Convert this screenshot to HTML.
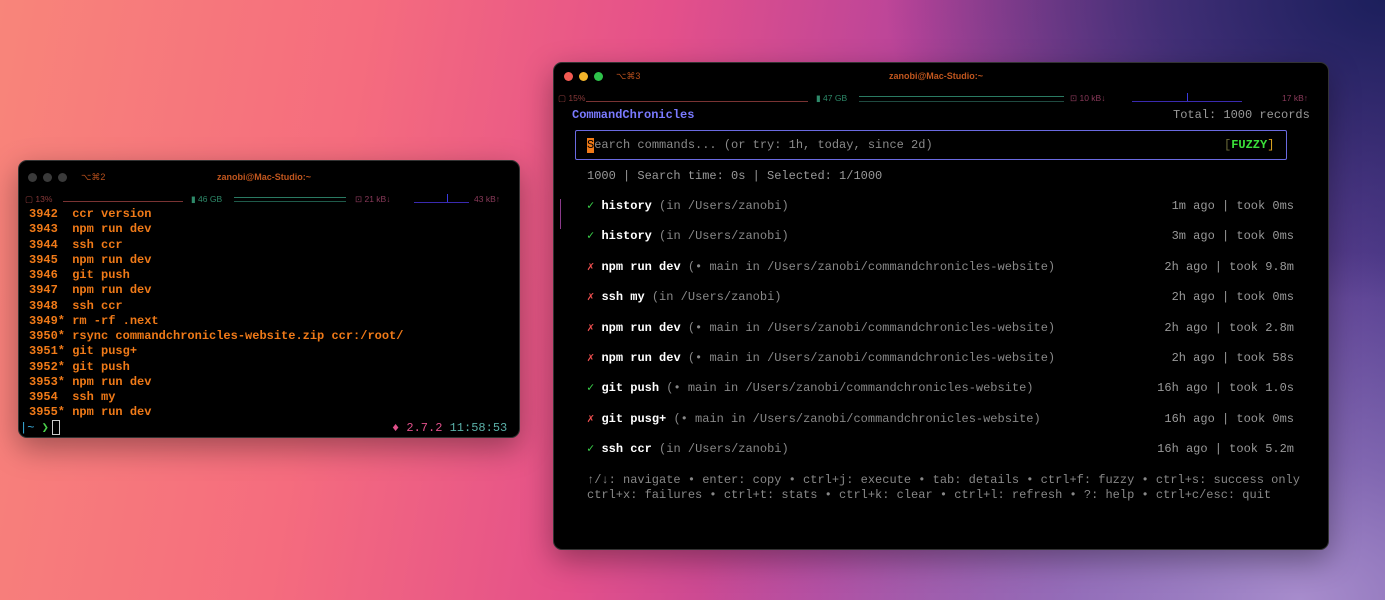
<!DOCTYPE html>
<html><head><meta charset="utf-8"><style>
*{margin:0;padding:0;box-sizing:border-box}
html,body{width:1385px;height:600px;overflow:hidden}
body{position:relative;font-family:"Liberation Mono",monospace;
background:
radial-gradient(ellipse 500px 300px at 1385px 0px,#1c1f5c 0%,rgba(40,35,100,.7) 45%,rgba(60,40,110,0) 100%),
radial-gradient(ellipse 600px 350px at 1300px 600px,#a78ccc 0%,rgba(160,130,200,.6) 40%,rgba(160,120,200,0) 100%),
linear-gradient(100deg,#f8857a 0%,#f56c7e 25%,#e4508a 45%,#b8449a 62%,#7d4aa0 80%,#4a3a8a 100%);}
.win{position:absolute;background:#000;border-radius:9px;box-shadow:0 10px 30px rgba(0,0,0,.35);border:1px solid #333}
.t{position:absolute;white-space:pre;font-size:12px;line-height:15px}
.dot{position:absolute;width:9px;height:9px;border-radius:50%}
.sm{position:absolute;font-family:"Liberation Sans",sans-serif;font-size:8.5px;white-space:pre}
</style></head><body>

<!-- LEFT WINDOW -->
<div class="win" style="left:18px;top:160px;width:502px;height:278px">
 <div class="dot" style="left:9px;top:12px;background:#3a3a3a"></div>
 <div class="dot" style="left:24px;top:12px;background:#3a3a3a"></div>
 <div class="dot" style="left:39px;top:12px;background:#3a3a3a"></div>
 <div class="sm" style="left:62px;top:11px;color:#b8501c;font-size:9px">⌥⌘2</div>
 <div class="sm" style="left:198px;top:11px;color:#c0561e;font-size:9px;font-weight:bold">zanobi@Mac-Studio:~</div>
 <div class="sm" style="left:6px;top:33px;color:#8a3a3a">▢ 13%</div>
 <div style="position:absolute;left:44px;top:40px;width:120px;height:1px;background:#7a3333"></div>
 <div class="sm" style="left:172px;top:33px;color:#2e8a6a">▮ 46 GB</div>
 <div style="position:absolute;left:215px;top:36px;width:112px;height:1px;background:#2a7a62"></div>
 <div style="position:absolute;left:215px;top:40px;width:112px;height:1px;background:#1f5a4a"></div>
 <div class="sm" style="left:336px;top:33px;color:#8a3a5a">⊡ 21 kB↓</div>
 <div style="position:absolute;left:395px;top:41px;width:55px;height:1px;background:#3a2ab0"></div>
 <div style="position:absolute;left:428px;top:33px;width:1px;height:8px;background:#3a3ae0"></div>
 <div class="sm" style="left:455px;top:33px;color:#8a3a5a">43 kB↑</div>
 <div class="t" style="left:10px;top:46px;color:#f07a18;font-weight:bold;line-height:15.25px">3942  ccr version
3943  npm run dev
3944  ssh ccr
3945  npm run dev
3946  git push
3947  npm run dev
3948  ssh ccr
3949* rm -rf .next
3950* rsync commandchronicles-website.zip ccr:/root/
3951* git pusg+
3952* git push
3953* npm run dev
3954  ssh my
3955* npm run dev</div>
 <div class="t" style="left:1px;top:260px;color:#3ab0e0">|~ <span style="color:#4ad04a">❯</span></div>
 <div style="position:absolute;left:33px;top:259px;width:8px;height:15px;border:1px solid #ccc"></div>
 <div class="t" style="left:373px;top:260px;color:#e0508a">♦ 2.7.2 <span style="color:#5ab0a8">11:58:53</span></div>
</div>

<!-- RIGHT WINDOW -->
<div class="win" style="left:553px;top:62px;width:776px;height:488px">
 <div class="dot" style="left:10px;top:9px;background:#f25a52"></div>
 <div class="dot" style="left:25px;top:9px;background:#f4b52a"></div>
 <div class="dot" style="left:40px;top:9px;background:#2ec24a"></div>
 <div class="sm" style="left:62px;top:8px;color:#b8501c;font-size:9px">⌥⌘3</div>
 <div class="sm" style="left:335px;top:8px;color:#c0561e;font-size:9px;font-weight:bold">zanobi@Mac-Studio:~</div>
 <div class="sm" style="left:4px;top:30px;color:#8a3a3a">▢ 15%</div>
 <div style="position:absolute;left:32px;top:38px;width:222px;height:1px;background:#7a3333"></div>
 <div class="sm" style="left:262px;top:30px;color:#2e8a6a">▮ 47 GB</div>
 <div style="position:absolute;left:305px;top:33px;width:205px;height:1px;background:#2a7a62"></div>
 <div style="position:absolute;left:305px;top:38px;width:205px;height:1px;background:#1f4a40"></div>
 <div class="sm" style="left:516px;top:30px;color:#8a3a5a">⊡ 10 kB↓</div>
 <div style="position:absolute;left:578px;top:38px;width:110px;height:1px;background:#3a2ab0"></div>
 <div style="position:absolute;left:633px;top:30px;width:1px;height:8px;background:#3a3ae0"></div>
 <div class="sm" style="left:728px;top:30px;color:#8a3a5a">17 kB↑</div>

 <div class="t" style="left:18px;top:45px;color:#7a7aff;font-weight:bold">CommandChronicles</div>
 <div class="t" style="left:619px;top:45px;color:#999">Total: 1000 records</div>

 <div style="position:absolute;left:21px;top:67px;width:712px;height:30px;border:1px solid #6a6ae0;border-radius:2px"></div>
 <div style="position:absolute;left:33px;top:75px;width:7px;height:15px;background:#f07a18"></div>
 <div class="t" style="left:33px;top:75px;color:#8a8a8a"><span style="color:#000">S</span>earch commands... (or try: 1h, today, since 2d)</div>
 <div class="t" style="left:670px;top:75px;color:#6a6a3a">[<span style="color:#3ae03a;font-weight:bold">FUZZY</span><span style="color:#d8a020">]</span></div>

 <div class="t" style="left:33px;top:106px;color:#999">1000 | Search time: 0s | Selected: 1/1000</div>

 <div style="position:absolute;left:6px;top:136px;width:1px;height:30px;background:#8a3a8a"></div>

 <div class="t" style="left:33px;top:128px;line-height:30.4px;color:#888"><span style="color:#3ad04a">✓</span> <b style="color:#fff">history</b> (in /Users/zanobi)
<span style="color:#3ad04a">✓</span> <b style="color:#fff">history</b> (in /Users/zanobi)
<span style="color:#f05050">✗</span> <b style="color:#fff">npm run dev</b> (• main in /Users/zanobi/commandchronicles-website)
<span style="color:#f05050">✗</span> <b style="color:#fff">ssh my</b> (in /Users/zanobi)
<span style="color:#f05050">✗</span> <b style="color:#fff">npm run dev</b> (• main in /Users/zanobi/commandchronicles-website)
<span style="color:#f05050">✗</span> <b style="color:#fff">npm run dev</b> (• main in /Users/zanobi/commandchronicles-website)
<span style="color:#3ad04a">✓</span> <b style="color:#fff">git push</b> (• main in /Users/zanobi/commandchronicles-website)
<span style="color:#f05050">✗</span> <b style="color:#fff">git pusg+</b> (• main in /Users/zanobi/commandchronicles-website)
<span style="color:#3ad04a">✓</span> <b style="color:#fff">ssh ccr</b> (in /Users/zanobi)</div>

 <div class="t" style="right:34px;top:128px;line-height:30.4px;color:#999;text-align:right">1m ago | took 0ms
3m ago | took 0ms
2h ago | took 9.8m
2h ago | took 0ms
2h ago | took 2.8m
2h ago | took 58s
16h ago | took 1.0s
16h ago | took 0ms
16h ago | took 5.2m</div>

 <div class="t" style="left:33px;top:410px;color:#888">↑/↓: navigate • enter: copy • ctrl+j: execute • tab: details • ctrl+f: fuzzy • ctrl+s: success only
ctrl+x: failures • ctrl+t: stats • ctrl+k: clear • ctrl+l: refresh • ?: help • ctrl+c/esc: quit</div>
</div>
</body></html>
